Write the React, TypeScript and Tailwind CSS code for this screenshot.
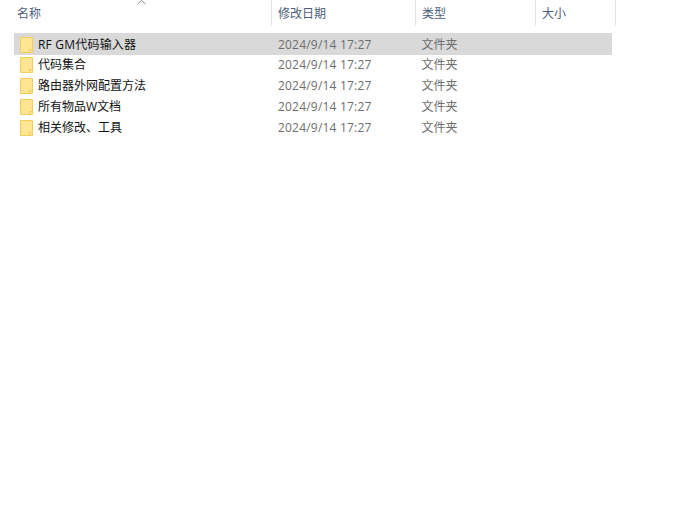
const folders = [
  "RF GM代码输入器",
  "代码集合",
  "路由器外网配置方法",
  "所有物品W文档",
  "相关修改、工具",
];

function FolderIcon() {
  return (
    <svg width="13" height="16" viewBox="0 0 13 16" className="shrink-0">
      <path d="M0.5 0.5H12.5V15.5H0.5Z" fill="#fde592" stroke="#f3cd5c" />
      <path d="M9.5 15.5V12.5H12.5" fill="none" stroke="#f3cd5c" />
    </svg>
  );
}

function HeaderCell({ label, width }: { label: string; width: string }) {
  return (
    <div className={`${width} h-[26px] border-r border-[#e5e5e5] pl-[6px] pt-[6px] text-[12px] leading-[16px] text-[#4c607a]`}>
      {label}
    </div>
  );
}

export default function App() {
  return (
    <div className="min-h-[509px] w-[682px] bg-white font-['Open_Sans','Noto_Sans_CJK_SC',sans-serif]">
      {/* Header */}
      <div className="relative flex pl-[11px]">
        <HeaderCell label="名称" width="w-[261px]" />
        <HeaderCell label="修改日期" width="w-[144px]" />
        <HeaderCell label="类型" width="w-[120px]" />
        <HeaderCell label="大小" width="w-[80px]" />
        <svg width="9" height="5" viewBox="0 0 9 5" className="absolute left-[137px] top-0">
          <path d="M0.5 4L4.5 0.5L8.5 4" fill="none" stroke="#8a8a8a" />
        </svg>
      </div>

      {/* Rows */}
      <div className="ml-[14px] mt-[7px] w-[598px]">
        {folders.map((name, i) => (
          <div
            key={name}
            className={`flex items-center text-[12px] ${i === 0 ? "-mb-px h-[22px] bg-[#d9d9d9] pt-[1px]" : "h-[21px]"}`}
          >
            <div className="flex w-[264px] items-center gap-[5px] pl-[6px]">
              <FolderIcon />
              <span className={`text-[#111111] ${i === 0 ? "tracking-[0.2px]" : ""}`}>{name}</span>
            </div>
            <div className="w-[143.5px] tracking-[0.2px] text-[#6d6d6d]">2024/9/14 17:27</div>
            <div className="text-[#6d6d6d]">文件夹</div>
          </div>
        ))}
      </div>
    </div>
  );
}
